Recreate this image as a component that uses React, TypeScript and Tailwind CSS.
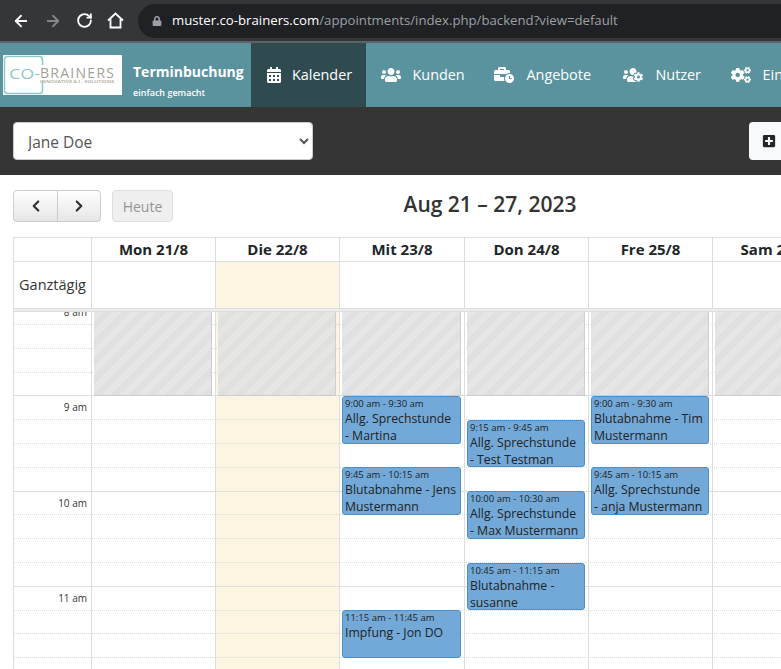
import React from 'react';
import { ArrowLeft, ArrowRight, RotateCw, ChevronLeft, ChevronRight } from 'lucide-react';
import { FaCalendarAlt, FaUsers, FaBusinessTime, FaUsersCog, FaCogs, FaPlusSquare, FaLock } from 'react-icons/fa';

const navItems = [
  { label: 'Kalender', icon: FaCalendarAlt, active: true, box: 'w-[115px] gap-[10.5px]', size: 16 },
  { label: 'Kunden', icon: FaUsers, active: false, box: 'w-[113px] gap-[12px]', size: 20 },
  { label: 'Angebote', icon: FaBusinessTime, active: false, box: 'w-[129px] gap-[13px]', size: 20 },
  { label: 'Nutzer', icon: FaUsersCog, active: false, box: 'w-[108px] gap-[13px]', size: 20 },
  { label: 'Einstellungen', icon: FaCogs, active: false, box: 'w-[140px] gap-[12px]', size: 20 },
];

const columns = [
  { head: 'Mon 21/8', events: [] },
  { head: 'Die 22/8', today: true, events: [] },
  {
    head: 'Mit 23/8',
    events: [
      { top: 84, h: 48, time: '9:00 am - 9:30 am', title: 'Allg. Sprechstunde - Martina' },
      { top: 155, h: 48, time: '9:45 am - 10:15 am', title: 'Blutabnahme - Jens Mustermann' },
      { top: 298, h: 48, time: '11:15 am - 11:45 am', title: 'Impfung - Jon DO' },
    ],
  },
  {
    head: 'Don 24/8',
    events: [
      { top: 108, h: 47, time: '9:15 am - 9:45 am', title: 'Allg. Sprechstunde - Test Testman' },
      { top: 179, h: 48, time: '10:00 am - 10:30 am', title: 'Allg. Sprechstunde - Max Mustermann' },
      { top: 251, h: 47, time: '10:45 am - 11:15 am', title: 'Blutabnahme - susanne' },
    ],
  },
  {
    head: 'Fre 25/8',
    events: [
      { top: 84, h: 48, time: '9:00 am - 9:30 am', title: 'Blutabnahme - Tim Mustermann' },
      { top: 155, h: 48, time: '9:45 am - 10:15 am', title: 'Allg. Sprechstunde - anja Mustermann' },
    ],
  },
  { head: 'Sam 26/8', events: [] },
];

const gridCols = 'grid grid-cols-[78px_124px_124px_125px_124px_124px_124px]';

// y-lines of the time grid, first slot is cut off by the scroller
const slots = [
  { h: 'h-[13px]', line: 'dotted' },
  { h: 'h-[24px]', line: 'dotted' },
  { h: 'h-[24px]', line: 'dotted' },
  { h: 'h-[23px]', line: 'solid' },
  { h: 'h-[24px]', line: 'dotted', label: '9 am' },
  { h: 'h-[24px]', line: 'dotted' },
  { h: 'h-[24px]', line: 'dotted' },
  { h: 'h-[24px]', line: 'solid' },
  { h: 'h-[23px]', line: 'dotted', label: '10 am' },
  { h: 'h-[24px]', line: 'dotted' },
  { h: 'h-[24px]', line: 'dotted' },
  { h: 'h-[24px]', line: 'solid' },
  { h: 'h-[24px]', line: 'dotted', label: '11 am' },
  { h: 'h-[23px]', line: 'dotted' },
  { h: 'h-[24px]', line: 'dotted' },
  { h: 'h-[24px]', line: 'solid' },
];

const Logo = () => (
  <svg width="119" height="40" viewBox="0 0 119 40" className="shrink-0 bg-white">
    <rect x="1.5" y="1.5" width="38" height="37" rx="3" fill="none" stroke="#8cc8c8" strokeWidth="1.5" />
    <rect x="36" y="10" width="6" height="16" fill="white" />
    <text x="6" y="24" fontSize="14" textLength="31" lengthAdjust="spacingAndGlyphs" fill="#8cc8c8" fontFamily="Open Sans, sans-serif">CO-</text>
    <text x="37" y="23" fontSize="14" textLength="74" fill="#a39e96" fontFamily="Open Sans, sans-serif">BRAINERS</text>
    <text x="37" y="28" fontSize="4" fontWeight="700" textLength="74" lengthAdjust="spacingAndGlyphs" fill="#b8b2ab" fontFamily="Open Sans, sans-serif">INNOVATIVE A.I - SOLUTIONS</text>
  </svg>
);

const BrowserBar = () => (
  <div className="flex h-[43px] items-center border-b-2 border-[#5f6368] bg-[#35363a] pl-[12px]">
    <ArrowLeft size={18} strokeWidth={2.4} className="text-white" />
    <ArrowRight size={18} strokeWidth={2.4} className="ml-[14px] text-[#85878a]" />
    <RotateCw size={17} strokeWidth={2.6} className="ml-[14px] text-white" />
    <svg width="17" height="17" viewBox="0 0 17 17" className="ml-[14px]" fill="none" stroke="white" strokeWidth="1.8">
      <path d="M1 8.5 8.5 1.5 16 8.5M3.5 7v8.5h10V7" />
    </svg>
    <div className="ml-[14px] flex h-[34px] flex-1 items-center rounded-l-[17px] bg-[#202124] pl-[14px]">
      <FaLock size={10} className="text-[#9aa0a6]" />
      <span className="ml-[10px] text-[13.2px] whitespace-nowrap text-white">
        muster.co-brainers.com<span className="text-[#9aa0a6]">/appointments/index.php/backend?view=default</span>
      </span>
    </div>
  </div>
);

const Nav = () => (
  <div className="flex h-16 items-stretch bg-[#5a939e]">
    <div className="flex w-[251px] shrink-0 items-center pl-[3px]">
      <Logo />
      <div className="ml-[11px] pt-[10px] text-white">
        <div className="text-[14px] leading-[20px] font-bold whitespace-nowrap">Terminbuchung</div>
        <div className="mt-[5px] text-[9px] leading-[12px] font-semibold whitespace-nowrap">einfach gemacht</div>
      </div>
    </div>
    {navItems.map(item => (
      <div
        key={item.label}
        className={`flex shrink-0 items-center pl-[14.5px] text-[14.4px] whitespace-nowrap text-white ${item.box} ${item.active ? 'bg-[#2f4b50]' : ''}`}
      >
        <item.icon size={item.size} />
        <span>{item.label}</span>
      </div>
    ))}
  </div>
);

const Toolbar = () => (
  <div className="flex h-[68px] items-center bg-[#353535] pl-[13px]">
    <select className="h-[38px] w-[300px] shrink-0 rounded-[4px] border border-[#ccc] bg-white pt-[2px] pl-[10px] text-[15.5px] text-[#555]">
      <option>Jane Doe</option>
    </select>
    <div className="ml-[436px] flex h-[38px] w-[60px] shrink-0 items-center rounded-[4px] bg-[#f8f9fa] pl-[13px] text-[#212529]">
      <FaPlusSquare size={14} />
    </div>
  </div>
);

const CalendarHeader = () => (
  <div className="flex h-[32px] items-center">
    <div className="flex h-[32px] overflow-hidden rounded-[4px] border border-[#ccc] bg-gradient-to-b from-white to-[#e6e6e6] text-[#333]">
      <div className="flex w-[44px] items-center justify-center border-r border-[#ccc]">
        <ChevronLeft size={18} strokeWidth={3} />
      </div>
      <div className="flex w-[42px] items-center justify-center">
        <ChevronRight size={18} strokeWidth={3} />
      </div>
    </div>
    <div className="ml-[11px] flex h-[32px] w-[61px] items-center justify-center rounded-[4px] border border-[#ddd] bg-[#efefef] text-[14px] text-[#949494]">
      Heute
    </div>
    <div className="ml-[156px] w-[322px] pb-[2px] text-center text-[21px] font-semibold text-[#333]">Aug 21 – 27, 2023</div>
  </div>
);

const Calendar = () => (
  <div className="mt-[15px] border-t border-l border-[#ddd]">
    <div className={`${gridCols} h-[24px] border-b border-[#ddd]`}>
      <div className="border-r border-[#ddd]" />
      {columns.map(col => (
        <div key={col.head} className="border-r border-[#ddd] text-center text-[15px] leading-[23px] font-bold whitespace-nowrap text-[#212529]">
          {col.head}
        </div>
      ))}
    </div>
    <div className={`${gridCols} h-[46px]`}>
      <div className="flex items-center justify-center border-r border-[#ddd] text-[14.5px] text-[#333]">Ganztägig</div>
      {columns.map(col => (
        <div key={col.head} className={`border-r border-[#ddd] ${col.today ? 'bg-[#fcf5e2]' : ''}`} />
      ))}
    </div>
    <div className="h-[4px] border-y border-[#ddd] bg-[#eee]" />
    <div className="relative overflow-hidden">
      <div className={`absolute inset-0 ${gridCols}`}>
        <div className="border-r border-[#ddd]" />
        {columns.map(col => (
          <div key={col.head} className={`border-r border-[#ddd] ${col.today ? 'bg-[#fcf5e2]' : ''}`} />
        ))}
      </div>
      <div className="relative">
        {slots.map((slot, i) => (
          <div key={i} className={`${slot.h} relative border-b ${slot.line === 'solid' ? 'border-solid border-[#ddd]' : 'border-dotted border-[#ddd]'}`}>
            {slot.label && (
              <span className="absolute top-[3px] left-[51px] flex w-[22px] justify-end text-[10px] leading-[16px] whitespace-nowrap text-[#333]">{slot.label}</span>
            )}
          </div>
        ))}
        <span className="absolute top-[-6px] left-[51px] flex w-[22px] justify-end text-[10px] leading-[12px] whitespace-nowrap text-[#333]">8 am</span>
      </div>
      <div className={`absolute inset-0 ${gridCols}`}>
        <div />
        {columns.map(col => (
          <div key={col.head} className="relative">
            <div className="absolute top-0 right-[4px] left-[2px] h-[84px] border-r border-b border-[#ccc] bg-[repeating-linear-gradient(135deg,#e5e5e5_0,#e5e5e5_6.4px,#dfdfdf_6.4px,#dfdfdf_12.8px)] opacity-95" />
            {col.events.map(ev => (
              <div
                key={ev.time}
                className="absolute right-[4px] left-[2px] overflow-hidden rounded-[3px] border border-[#4a8fc7] bg-[#72a9d8] px-[2px] text-[#222]"
                style={{ top: ev.top, height: ev.h }}
              >
                <div className="text-[9.5px] leading-[13px]">{ev.time}</div>
                <div className="text-[12.25px] leading-[17px]">{ev.title}</div>
              </div>
            ))}
          </div>
        ))}
      </div>
    </div>
  </div>
);

export default function App() {
  return (
    <div className="h-[669px] w-[781px] overflow-hidden bg-white font-['Open_Sans',sans-serif]">
      <BrowserBar />
      <Nav />
      <Toolbar />
      <div className="pt-[15px] pl-[13px]">
        <CalendarHeader />
        <Calendar />
      </div>
    </div>
  );
}
